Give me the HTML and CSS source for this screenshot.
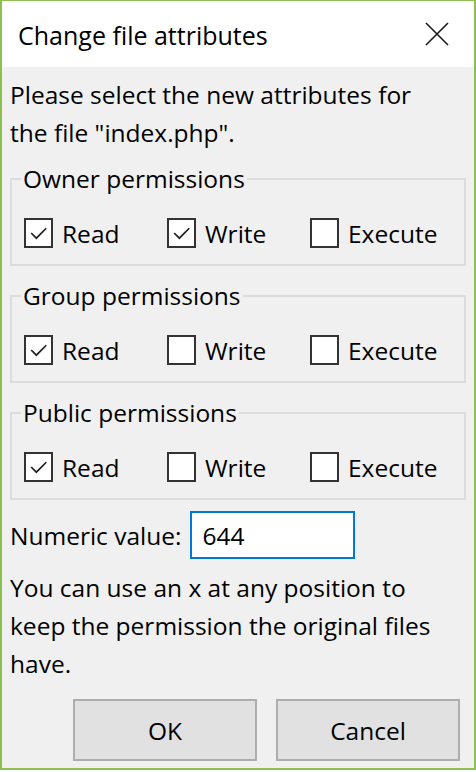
FILE: index.html
```html
<!DOCTYPE html>
<html lang="en">
<head>
<meta charset="utf-8">
<title>Change file attributes</title>
<link rel="stylesheet" href="styles.css">
</head>
<body>
<div class="window">
  <div class="titlebar">
    <span class="title">Change file attributes</span>
    <svg class="close" width="24" height="24" viewBox="0 0 24 24"><path d="M1 1 L23 23 M23 1 L1 23" stroke="#1a1a1a" stroke-width="1.6" fill="none"/></svg>
  </div>
  <div class="content">
    <p class="intro">Please select the new attributes for the file "index.php".</p>

    <fieldset class="group">
      <legend>Owner permissions</legend>
      <div class="row">
        <label class="check"><span class="box on"><svg viewBox="0 0 29 29"><path d="M6 14.5 L12 20.5 L23.5 9" /></svg></span>Read</label>
        <label class="check"><span class="box on"><svg viewBox="0 0 29 29"><path d="M6 14.5 L12 20.5 L23.5 9" /></svg></span>Write</label>
        <label class="check"><span class="box"></span>Execute</label>
      </div>
    </fieldset>

    <fieldset class="group">
      <legend>Group permissions</legend>
      <div class="row">
        <label class="check"><span class="box on"><svg viewBox="0 0 29 29"><path d="M6 14.5 L12 20.5 L23.5 9" /></svg></span>Read</label>
        <label class="check"><span class="box"></span>Write</label>
        <label class="check"><span class="box"></span>Execute</label>
      </div>
    </fieldset>

    <fieldset class="group">
      <legend>Public permissions</legend>
      <div class="row">
        <label class="check"><span class="box on"><svg viewBox="0 0 29 29"><path d="M6 14.5 L12 20.5 L23.5 9" /></svg></span>Read</label>
        <label class="check"><span class="box"></span>Write</label>
        <label class="check"><span class="box"></span>Execute</label>
      </div>
    </fieldset>

    <div class="numeric">
      <span class="num-label">Numeric value:</span>
      <span class="input">644</span>
    </div>

    <p class="hint">You can use an x at any position to keep the permission the original files have.</p>

    <div class="buttons">
      <span class="btn">OK</span>
      <span class="btn">Cancel</span>
    </div>
  </div>
</div>
</body>
</html>
```

FILE: styles.css
```css
html, body {
  margin: 0;
  padding: 0;
  background: #ffffff;
}
body {
  font-family: "Open Sans", "Noto Sans", sans-serif;
  font-size: 24.5px;
  color: #000;
}
.window {
  box-sizing: border-box;
  width: 476px;
  height: 770px;
  border: 2px solid #8cc152;
  border-top-width: 1px;
  display: flex;
  flex-direction: column;
  background: #f0f0f0;
}
.titlebar {
  height: 66px;
  background: #ffffff;
  display: flex;
  align-items: center;
  justify-content: space-between;
  padding: 0 25px 0 16px;
  flex: none;
}
.title {
  font-size: 25px;
  line-height: 30px;
  margin-top: 2px;
}
.close {
  display: block;
}
.content {
  flex: 1;
  padding: 0 0 0 8px;
  display: flex;
  flex-direction: column;
}
.intro, .hint {
  margin: 0;
  line-height: 38px;
}
.intro {
  margin-top: 9px;
  width: 430px;
}
.group {
  margin: 12px 8px 0 0;
  padding: 0 0 16px 0;
  border: 2px solid #dcdcdc;
  min-width: 0;
}
.group + .group {
  margin-top: 15px;
}
legend {
  margin-left: 9px;
  padding: 0 2px;
  line-height: 30px;
}
.row {
  display: flex;
  margin-top: 24px;
  padding-left: 12px;
}
.check {
  display: flex;
  align-items: center;
  width: 143px;
  height: 30px;
}
.box {
  box-sizing: border-box;
  width: 29px;
  height: 30px;
  border: 2px solid #333333;
  background: #ffffff;
  margin-right: 9px;
  flex: none;
  display: flex;
}
.box svg {
  width: 25px;
  height: 26px;
}
.box svg path {
  fill: none;
  stroke: #222;
  stroke-width: 2;
}
.numeric {
  display: flex;
  align-items: center;
  margin-top: 11px;
  height: 48px;
}
.num-label {
  margin-right: 9px;
}
.input {
  box-sizing: border-box;
  width: 165px;
  height: 48px;
  border: 2px solid #0078d7;
  background: #ffffff;
  padding-left: 10px;
  display: flex;
  align-items: center;
}
.hint {
  margin-top: 10px;
  width: 448px;
}
.buttons {
  display: flex;
  justify-content: flex-end;
  gap: 19px;
  margin-top: 16px;
  padding-right: 14px;
}
.btn {
  box-sizing: border-box;
  width: 184px;
  height: 62px;
  border: 2px solid #adadad;
  background: #e1e1e1;
  display: flex;
  align-items: center;
  justify-content: center;
}
```
